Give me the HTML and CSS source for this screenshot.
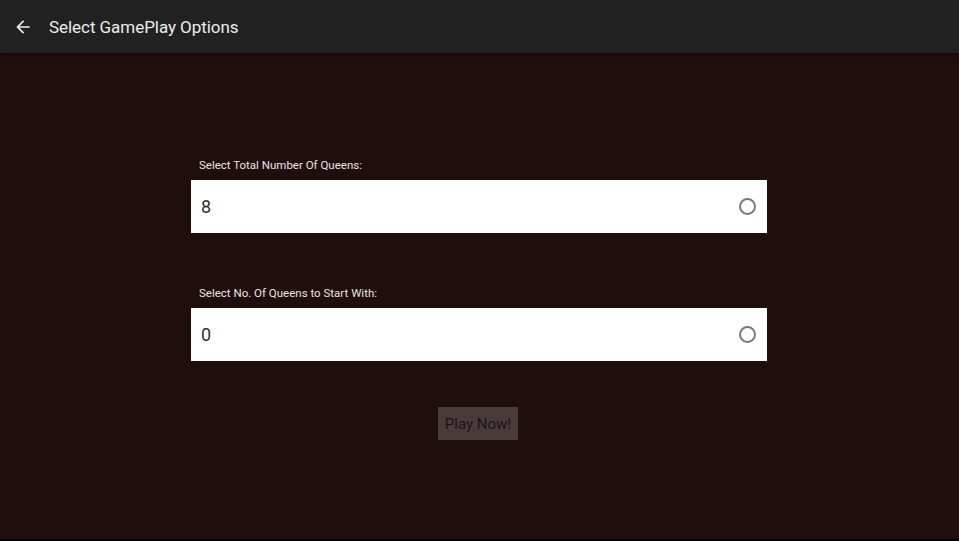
FILE: index.html
```html
<!DOCTYPE html>
<html>
<head>
<meta charset="utf-8">
<link rel="stylesheet" href="styles.css">
</head>
<body>
<div class="app">
  <header class="bar">
    <svg class="back" width="20" height="20" viewBox="0 0 24 24"><path d="M20 11H7.83l5.59-5.59L12 4l-8 8 8 8 1.41-1.41L7.83 13H20v-2z" fill="#ececec"/></svg>
    <span class="title">Select GamePlay Options</span>
  </header>
  <main class="content">
    <div class="form">
      <div class="label">Select Total Number Of Queens:</div>
      <div class="field"><span class="value">8</span><span class="radio"></span></div>
      <div class="label second">Select No. Of Queens to Start With:</div>
      <div class="field"><span class="value">0</span><span class="radio"></span></div>
      <div class="actions"><button class="play">Play Now!</button></div>
    </div>
  </main>
  <div class="navstrip"></div>
</div>
</body>
</html>
```
FILE: styles.css
```css
html, body { margin: 0; padding: 0; }
body { background: #200e0d; font-family: Roboto, "Noto Sans", sans-serif; }
.app { width: 959px; height: 541px; display: flex; flex-direction: column; overflow: hidden; }
.bar {
  height: 53px; flex: none; background: #212121; display: flex; align-items: center;
  box-shadow: 0 1px 3px rgba(0,0,0,0.5); position: relative; z-index: 1;
}
.back { margin-left: 13px; width: 20px; height: 20px; margin-top: 1px; }
.title { margin-left: 16px; color: #ececec; font-size: 17px; margin-top: 1px; letter-spacing: -0.05px; }
.content { flex: 1; display: flex; justify-content: center; }
.form { width: 576px; padding-top: 106px; display: flex; flex-direction: column; margin-right: 1px; }
.label { color: #e8e2e2; font-size: 11.5px; line-height: 13px; padding-left: 8px; margin-bottom: 8px; }
.label.second { margin-top: 54px; }
.field {
  height: 53px; background: #fff; display: flex; align-items: center; justify-content: space-between;
  padding: 0 10px; box-sizing: border-box;
}
.value { font-size: 18px; color: #303030; }
.radio { width: 13px; height: 13px; border: 2px solid #7a7a7a; border-radius: 50%; margin-right: 1px; }
.actions { display: flex; justify-content: center; margin-top: 46px; }
.play {
  width: 80px; height: 33px; background: #4a3b3b; border: none; color: #1c1414;
  font-family: Roboto, sans-serif; font-size: 15px; padding: 0; margin-right: 2px;
}
.navstrip { height: 2px; background: #000; flex: none; }
```
